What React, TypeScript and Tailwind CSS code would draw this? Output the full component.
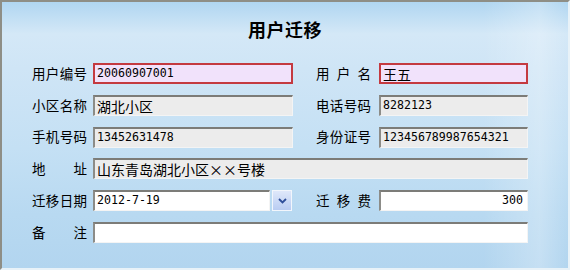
const cjk = '"Noto Sans CJK SC", "Noto Sans", sans-serif'

function Label({ text }: { text: string }) {
  return (
    <span
      className="flex w-[55px] justify-between text-[13.5px] leading-none text-black"
      style={{ fontFamily: cjk }}
    >
      {text.split('').map((ch, i) => (
        <span key={i}>{ch}</span>
      ))}
    </span>
  )
}

type FieldKind = 'key' | 'readonly' | 'edit'

function Field({
  value,
  kind,
  cjkText,
  right,
  className = '',
}: {
  value: string
  kind: FieldKind
  cjkText?: boolean
  right?: boolean
  className?: string
}) {
  const box =
    kind === 'key'
      ? 'border-2 border-[#c43a40] bg-[#f1e2fb]'
      : kind === 'readonly'
        ? 'border-t-2 border-l-2 border-r border-b border-t-[#7c7c78] border-l-[#8c8c88] border-r-[#f4f4f4] border-b-[#f4f4f4] bg-[#ececec]'
        : 'border-t-2 border-l-2 border-r border-b border-t-[#7c7c78] border-l-[#8c8c88] border-r-[#f4f4f4] border-b-[#f4f4f4] bg-white'
  return (
    <div
      className={`flex h-[21px] items-center px-[2px] text-black ${right ? 'justify-end pr-[4px]' : ''} ${box} ${className}`}
    >
      <span
        className={cjkText ? 'text-[14px] leading-none' : 'text-[11.6px] leading-none'}
        style={{ fontFamily: cjkText ? cjk : '"DejaVu Sans Mono", "Liberation Mono", monospace' }}
      >
        {value}
      </span>
    </div>
  )
}

export default function App() {
  return (
    <div className="relative h-[270px] w-[570px] overflow-hidden border-t-2 border-l-2 border-r-2 border-b-2 border-t-[#8e8e86] border-l-[#8e8e86] border-r-[#e8f2f8] border-b-[#e8f2f8] bg-[linear-gradient(to_bottom,#b0d6f1_0%,#d4e8f7_12%,#cfe5f6_25%,#c4e0f4_55%,#b8d9f1_80%,#b2d5ef_100%)]">
      <div className="pointer-events-none absolute inset-0 bg-[linear-gradient(to_right,rgba(255,255,255,0)_85%,rgba(255,255,255,0.25)_95%,rgba(255,255,255,0)_100%)]" />
      <div className="relative">
        <div className="flex h-[58px] items-start justify-center pt-[18px]">
          <h1
            className="text-[18px] font-bold leading-none tracking-[0.5px] text-black"
            style={{ fontFamily: cjk }}
          >
            用户迁移
          </h1>
        </div>

        <div className="ml-[30px] mt-[3px] grid grid-cols-[61px_200px_23px_63px_149px] items-center gap-y-[10.8px]">
          <Label text="用户编号" />
          <Field value="20060907001" kind="key" />
          <span />
          <Label text="用户名" />
          <Field value="王五" kind="key" cjkText />

          <Label text="小区名称" />
          <Field value="湖北小区" kind="readonly" cjkText />
          <span />
          <Label text="电话号码" />
          <Field value="8282123" kind="readonly" />

          <Label text="手机号码" />
          <Field value="13452631478" kind="readonly" />
          <span />
          <Label text="身份证号" />
          <Field value="123456789987654321" kind="readonly" />

          <Label text="地址" />
          <Field value="山东青岛湖北小区××号楼" kind="readonly" cjkText className="col-span-4" />

          <Label text="迁移日期" />
          <div className="flex items-center gap-[2px]">
            <Field value="2012-7-19" kind="edit" className="w-[177px]" />
            <button
              type="button"
              className="flex h-[21px] w-[20px] items-center justify-center border border-[#f2f6fc] bg-[linear-gradient(to_bottom,#dfe8fa,#b9ccf2)]"
            >
              <svg width="9" height="6" viewBox="0 0 9 6">
                <path d="M1 1 L4.5 4.5 L8 1" fill="none" stroke="#2f4f9a" strokeWidth="1.8" />
              </svg>
            </button>
          </div>
          <span />
          <Label text="迁移费" />
          <Field value="300" kind="edit" right />

          <Label text="备注" />
          <Field value="" kind="edit" className="col-span-4" />
        </div>
      </div>
    </div>
  )
}
